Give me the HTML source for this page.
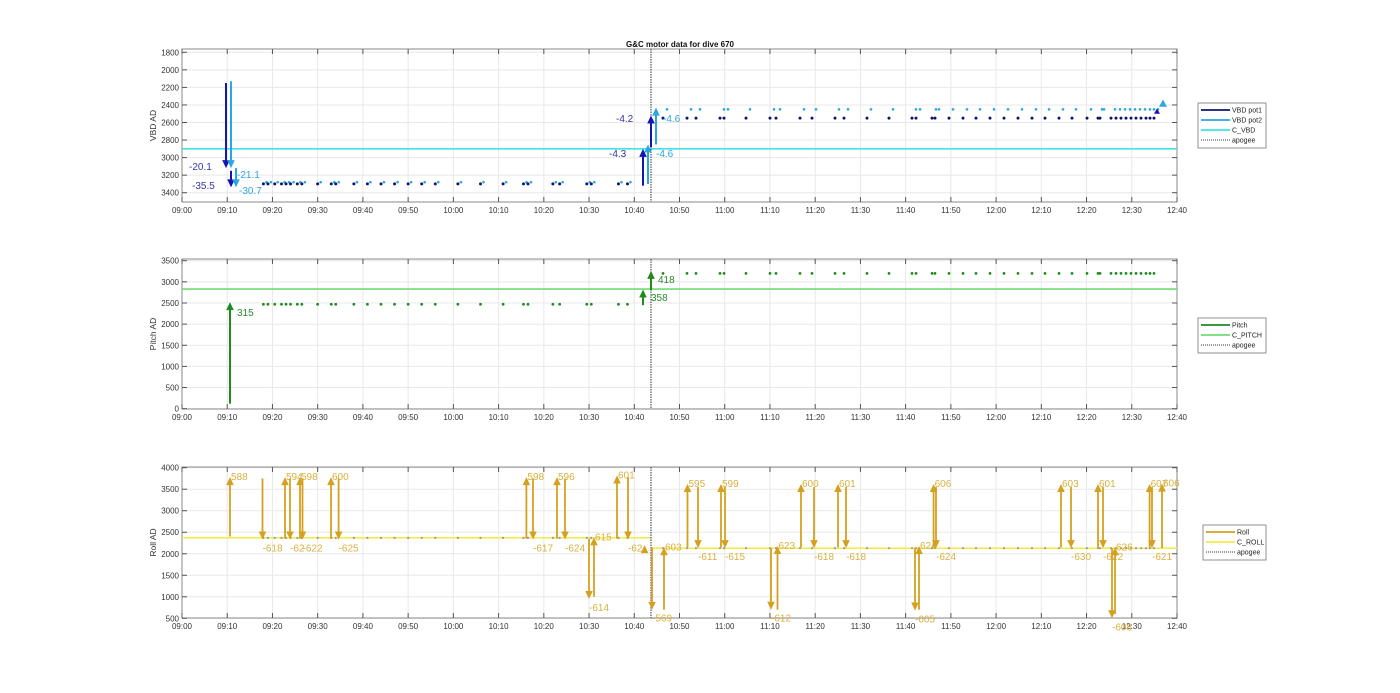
<!DOCTYPE html>
<html><head><meta charset="utf-8">
<style>
html,body{margin:0;padding:0;background:#fff;width:1400px;height:693px;overflow:hidden}
svg{display:block}
text{font-family:"Liberation Sans",sans-serif}
</style></head>
<body>
<svg id="s" width="1400" height="693" xmlns="http://www.w3.org/2000/svg"></svg>
<script>
const S=document.getElementById('s');
let out='';
const X0=182,X1=1177,PM=(X1-X0)/220;
const tx=m=>X0+m*PM;
function axes(top,bot,ticks,ymap,ylabel){
  // grid
  for(let m=0;m<=220;m+=10){const x=tx(m);out+=`<line x1="${x}" y1="${top}" x2="${x}" y2="${bot}" stroke="#e8e8e8" stroke-width="1"/>`;}
  ticks.forEach(v=>{const y=ymap(v);out+=`<line x1="${X0}" y1="${y}" x2="${X1}" y2="${y}" stroke="#e8e8e8" stroke-width="1"/>`;});
  out+=`<rect x="${X0}" y="${top}" width="${X1-X0}" height="${bot-top}" fill="none" stroke="#8a8a8a" stroke-width="1"/>`;
  for(let m=0;m<=220;m+=10){const x=tx(m);
    out+=`<line x1="${x}" y1="${bot}" x2="${x}" y2="${bot-5}" stroke="#555"/><line x1="${x}" y1="${top}" x2="${x}" y2="${top+5}" stroke="#555"/>`;
    const h=9+Math.floor(m/60),mm=m%60;const lab=(h<10?'0':'')+h+':'+(mm<10?'0':'')+mm;
    out+=`<text x="${x}" y="${bot+11}" font-size="8" fill="#333" text-anchor="middle">${lab}</text>`;}
  ticks.forEach(v=>{const y=ymap(v);out+=`<line x1="${X0}" y1="${y}" x2="${X0+5}" y2="${y}" stroke="#555"/><line x1="${X1}" y1="${y}" x2="${X1-5}" y2="${y}" stroke="#555"/><text x="${X0-3}" y="${y+3}" font-size="8" fill="#333" text-anchor="end">${v}</text>`;});
  const cy=(top+bot)/2;
  out+=`<text x="156" y="${cy}" font-size="8.5" fill="#333" text-anchor="middle" transform="rotate(-90 156 ${cy})">${ylabel}</text>`;
}
function arrow(x,y1,y2,c,w){w=w||2;const up=y2<y1;const hs=up?8:-8;
  out+=`<line x1="${x}" y1="${y1}" x2="${x}" y2="${y2+hs*0.7}" stroke="${c}" stroke-width="${w}"/>`;
  out+=`<polygon points="${x-3.8},${y2+hs} ${x+3.8},${y2+hs} ${x},${y2}" fill="${c}"/>`;}
function txt(x,y,t,c,s){out+=`<text x="${x}" y="${y}" font-size="${s||10}" fill="${c}">${t}</text>`;}
function dot(x,y,c,r){out+=`<circle cx="${x}" cy="${y}" r="${r||1.5}" fill="${c}"/>`;}
function legend(x,y,w,items){
  out+=`<rect x="${x}" y="${y}" width="${w}" height="${items.length*10+5}" fill="#fff" stroke="#777" stroke-width="0.8"/>`;
  items.forEach((it,i)=>{const yy=y+7+i*10;
    out+=`<line x1="${x+3}" y1="${yy}" x2="${x+32}" y2="${yy}" stroke="${it[1]}" stroke-width="${it[2]}" ${it[3]?'stroke-dasharray="1,1"':''}/>`;
    out+=`<text x="${x+34}" y="${yy+2.5}" font-size="7" fill="#222">${it[0]}</text>`;});
}
const APX=651;
/* ---------- Plot 1 VBD ---------- */
const v1=v=>52.3+(v-1800)*0.08775;
axes(49,202,[1800,2000,2200,2400,2600,2800,3000,3200,3400],v1,'VBD AD');
out+=`<text x="680" y="47" font-size="8" font-weight="bold" fill="#111" text-anchor="middle">G&amp;C motor data for dive 670</text>`;
out+=`<line x1="${X0}" y1="${v1(2900)}" x2="${X1}" y2="${v1(2900)}" stroke="#3fe3e3" stroke-width="1.6"/>`;
const preT=[18,19,20.5,22,23,24,25.5,26.5,30,33,34,38,41,44,47,50,53,56,61,66,71,75.5,76.5,82,83.5,89.5,90.5,96.5,98.5];
const postX=[663,687,696,720,724,746,770,776,800,812,835,844,867,889,912,916,932,935,949,963,976,990,1004,1018,1032,1045,1059,1072,1087,1098,1100,1111,1116,1121,1126,1131,1136,1141,1146,1150,1154];
preT.forEach(t=>{dot(tx(t),v1(3300),'#0a1670',1.5);dot(tx(t)+3,v1(3280),'#2aa7e0',1.3);});
postX.forEach((x,i)=>{dot(x,v1(2550),'#0a1670',1.5); if(i%1==0) dot(x+4,v1(2450),'#2aa7e0',1.3);});
out+=`<line x1="${APX}" y1="49" x2="${APX}" y2="202" stroke="#333" stroke-width="1" stroke-dasharray="1.5,1"/>`;
const P1='#1515b0',P2='#2aa7e0';
arrow(226,v1(2150),v1(3120),P1);arrow(231,v1(3150),v1(3340),P1);
arrow(231,v1(2130),v1(3120),P2);arrow(236,v1(3120),v1(3340),P2);
txt(189,170,'-20.1','#3535a5');txt(192,189,'-35.5','#3535a5');txt(237,178,'-21.1',P2);txt(239,194,'-30.7',P2);
arrow(643,v1(3320),v1(2900),P1);arrow(651,v1(2880),v1(2520),P1);
arrow(648,v1(3300),v1(2850),P2);arrow(656,v1(2850),v1(2430),P2);
txt(609,157,'-4.3','#3535a5');txt(616,122,'-4.2','#3535a5');txt(656,157,'-4.6',P2);txt(663,122,'-4.6',P2);
out+=`<polygon points="1154,${v1(2500)} 1160,${v1(2500)} 1157,${v1(2440)}" fill="${P1}"/>`;
out+=`<polygon points="1159,${v1(2420)} 1167,${v1(2420)} 1163,${v1(2340)}" fill="${P2}"/>`;
legend(1198,103,68,[['VBD pot1','#0a1670',1.8],['VBD pot2','#2aa7e0',1.8],['C_VBD','#3fe3e3',1.8],['apogee','#333',1,1]]);
/* ---------- Plot 2 Pitch ---------- */
const p2=v=>408.7-v*0.04229;
axes(259,409,[0,500,1000,1500,2000,2500,3000,3500],p2,'Pitch AD');
out+=`<line x1="${X0}" y1="${p2(2830)}" x2="${X1}" y2="${p2(2830)}" stroke="#6fdc6f" stroke-width="1.6"/>`;
const G='#1f8a1f';
preT.forEach(t=>dot(tx(t),p2(2470),G,1.4));
postX.forEach(x=>dot(x,p2(3200),G,1.4));
out+=`<line x1="${APX}" y1="259" x2="${APX}" y2="409" stroke="#333" stroke-width="1" stroke-dasharray="1.5,1"/>`;
arrow(230,p2(120),p2(2520),G);arrow(643,p2(2450),p2(2820),G);arrow(651,p2(2800),p2(3260),G);
txt(237,316,'315','#2a8a2a');txt(651,301,'358','#2a8a2a');txt(658,283,'418','#2a8a2a');
legend(1198,318,68,[['Pitch',G,1.8],['C_PITCH','#6fdc6f',1.8],['apogee','#333',1,1]]);
/* ---------- Plot 3 Roll ---------- */
const r3=v=>467.7+(4000-v)*0.04303;
axes(467,618,[500,1000,1500,2000,2500,3000,3500,4000],r3,'Roll AD');
out+=`<line x1="${X0}" y1="${r3(2370)}" x2="${APX}" y2="${r3(2370)}" stroke="#f5ec4a" stroke-width="1.6"/>`;
out+=`<line x1="${APX}" y1="${r3(2130)}" x2="${X1}" y2="${r3(2130)}" stroke="#f5ec4a" stroke-width="1.6"/>`;
const R='#d4a020',RL='#d9b040';
preT.forEach(t=>dot(tx(t),r3(2370),'#999',1.1));
postX.forEach(x=>dot(x,r3(2130),'#999',1.1));
out+=`<line x1="${APX}" y1="467" x2="${APX}" y2="618" stroke="#333" stroke-width="1" stroke-dasharray="1.5,1"/>`;
// [x, from, to, label, lx, ly]
const A=[
[230,2400,3780,'588'],[262.5,3750,2330,'-618'],[285,2350,3780,'594'],[290,3750,2330,'-62'],
[300,2350,3780,'598'],[302.5,3750,2330,'-622'],[331,2350,3780,'600'],[338.6,3750,2330,'-625'],
[526.4,2350,3780,'598'],[533,3750,2330,'-617'],[557,2350,3780,'596'],[565,3750,2330,'-624'],
[589,2350,950,'-614'],[594,1000,2380,'615'],[617,2350,3820,'601'],[628,3780,2330,'-62'],
[644.6,2130,2200,''],[652,2150,700,'-569'],[664,700,2150,'603'],
[687.5,2150,3620,'595'],[698,3550,2130,'-611'],[721,2150,3620,'599'],[725,3550,2130,'-615'],
[771,2130,700,'-612'],[777.5,700,2180,'623'],[801,2150,3620,'600'],[814,3550,2130,'-618'],
[838,2150,3620,'601'],[846,3550,2130,'-618'],[915,2130,680,'-605'],[919,700,2180,'624'],
[933.6,2150,3620,'606'],[936,3550,2130,'-624'],[1061,2150,3620,'603'],[1071,3550,2130,'-630'],
[1098,2150,3620,'601'],[1103,3550,2130,'-622'],[1112,2130,500,'-608'],[1115,600,2150,'626'],
[1149.6,2150,3620,'607'],[1152,3550,2130,'-621'],[1162,2130,3630,'606']];
A.forEach(a=>{arrow(a[0],r3(a[1]),r3(a[2]),R,1.8);
  if(a[3]){const up=a[2]>a[1];const y=up?r3(a[2])+3:r3(a[2])+12;txt(a[0]+(up?1:0),y,a[3],RL,10);}});
legend(1203,525,63,[['Roll',R,1.8],['C_ROLL','#f5ec4a',1.8],['apogee','#333',1,1]]);
S.innerHTML=out;
</script>
</body></html>
